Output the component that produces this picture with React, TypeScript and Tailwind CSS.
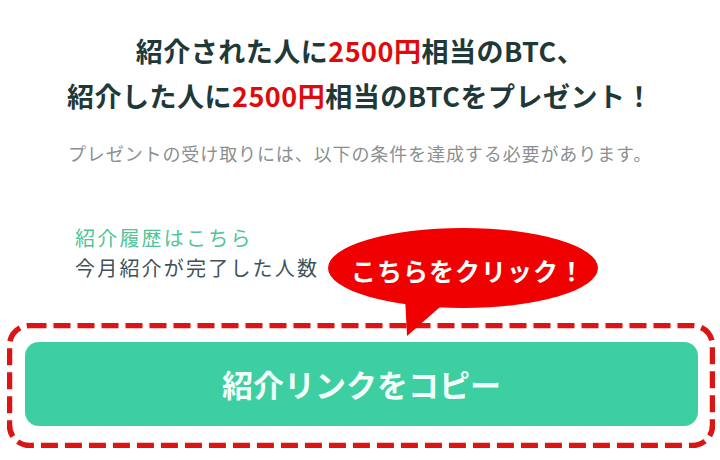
const jp = { fontFamily: '"Noto Sans CJK JP", "Noto Sans", sans-serif' };

const Red = ({ children }: { readonly children: string }) => (
  <span className="text-[#e10a0a]">{children}</span>
);

const ClickBubble = () => (
  <div className="absolute left-[326px] top-[226px] h-[112px] w-[276px]">
    <svg className="absolute inset-0" width="276" height="112" viewBox="0 0 276 112">
      <ellipse cx="137" cy="42" rx="135" ry="40" fill="#f00000" />
      <polygon points="79,70 81,110 122,74" fill="#f00000" />
    </svg>
    <span className="absolute left-[25px] top-[29px] text-[25px] leading-[30px] font-bold tracking-[1px] whitespace-nowrap text-white">
      こちらをクリック！
    </span>
  </div>
);

export default function App() {
  return (
    <div className="relative h-[460px] w-[720px] overflow-hidden bg-white" style={jp}>
      <h1 className="pt-[28px] text-center text-[27px] leading-[45px] font-bold tracking-[0.5px] text-[#1f3838]">
        紹介された人に<Red>2500円</Red>相当のBTC、
        <br />
        紹介した人に<Red>2500円</Red>相当のBTCをプレゼント！
      </h1>
      <p className="mt-[23px] text-center text-[18px] leading-[24px] tracking-[0.9px] text-[#8a9090]">
        プレゼントの受け取りには、以下の条件を達成する必要があります。
      </p>
      <div className="mt-[58px] flex flex-col pl-[75px] text-[20px] leading-[30px] tracking-[2.2px]">
        <span className="text-[#4fc596]">紹介履歴はこちら</span>
        <span className="text-[#3e5258]">今月紹介が完了した人数</span>
      </div>
      <div className="relative mt-[40px] ml-[7px] w-[708px] pt-[19px] pr-[17px] pb-[22px] pl-[18px]">
        <svg className="absolute inset-0" width="708" height="125" viewBox="0 0 708 125">
          <rect
            x="2.5"
            y="2.5"
            width="703"
            height="120"
            rx="20"
            fill="none"
            stroke="#dc1414"
            strokeWidth="5.5"
            strokeDasharray="17 7"
          />
        </svg>
        <button
          type="button"
          className="relative flex h-[84px] w-full items-center justify-center rounded-[14px] bg-[#3dcea2] text-[31px] font-bold text-[#f2fff9]"
        >
          紹介リンクをコピー
        </button>
      </div>
      <ClickBubble />
    </div>
  );
}
